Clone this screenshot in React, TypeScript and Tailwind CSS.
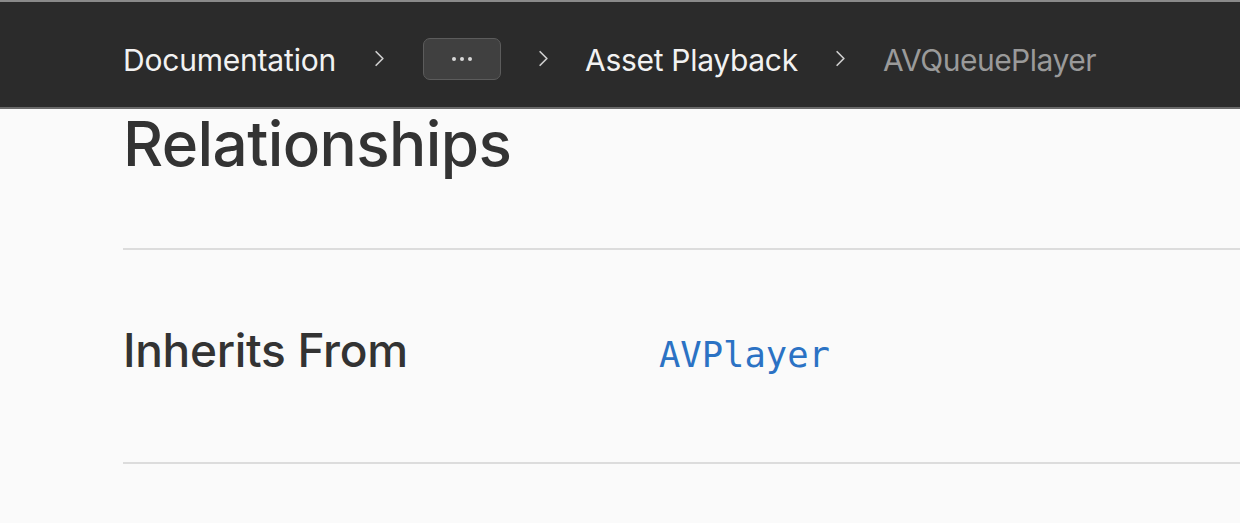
import { ChevronRight } from 'lucide-react';

const crumbs = ['Asset Playback'];

export default function App() {
    return (
        <div className="w-[1240px] h-[523px] overflow-hidden bg-[#fafafa] text-[#333333] font-['Inter',sans-serif]">
            {/* Top breadcrumb bar */}
            <div className="h-[109px] bg-[#2b2b2b] border-t-2 border-t-[#8a8a8a] border-b-2 border-b-[#6a6a6a] flex items-center pl-[123px] pt-[8px]">
                <span className="text-[30px] text-[#f2f2f2] tracking-[-0.2px] pt-[3px]">Documentation</span>
                <ChevronRight className="mx-[30px] w-[27px] h-[27px] text-[#cfcfcf]" strokeWidth={1.5} />
                <button className="w-[78px] h-[42px] rounded-[7px] bg-[#404040] border border-[#5c5c5c] flex items-center justify-center gap-[4px]">
                    {[0, 1, 2].map((i) => (
                        <span key={i} className="w-[4px] h-[4px] rounded-full bg-[#d8d8d8]" />
                    ))}
                </button>
                <ChevronRight className="ml-[29px] mr-[28px] w-[27px] h-[27px] text-[#cfcfcf]" strokeWidth={1.5} />
                {crumbs.map((c) => (
                    <span key={c} className="text-[30px] text-[#f2f2f2] tracking-[-0.3px] pt-[3px]">{c}</span>
                ))}
                <ChevronRight className="ml-[29px] mr-[29px] w-[27px] h-[27px] text-[#cfcfcf]" strokeWidth={1.5} />
                <span className="text-[30px] text-[#9a9a9a] tracking-[-0.5px] pt-[3px]">AVQueuePlayer</span>
            </div>

            {/* Content */}
            <div className="pl-[123px]">
                <h2 className="text-[62px] font-medium leading-[72px] tracking-[-0.6px] -mt-[1px]">Relationships</h2>
                <div className="mt-[68px] border-t-2 border-[#dcdcdc]" />
                <div className="flex items-baseline h-[212px] pt-[72px]">
                    <h3 className="w-[536px] text-[46px] font-medium tracking-[-0.3px] leading-[56px]">Inherits From</h3>
                    <span className="text-[35.5px] text-[#2b72c4] font-['DejaVu_Sans_Mono',monospace]">AVPlayer</span>
                </div>
                <div className="border-t-2 border-[#dcdcdc]" />
            </div>
        </div>
    );
}
